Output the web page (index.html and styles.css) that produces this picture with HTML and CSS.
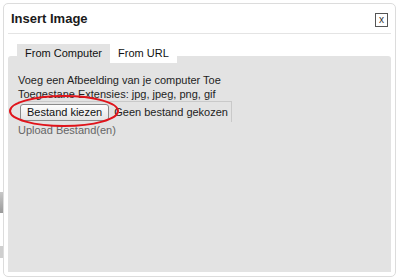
FILE: index.html
```html
<!DOCTYPE html>
<html lang="en">
<head>
  <meta charset="UTF-8" />
  <title>Insert Image</title>
  <link rel="stylesheet" href="styles.css">
</head>
<body>
  <div class="page-edge">
    <span class="edge-bar"></span>
    <span class="edge-bar small"></span>
  </div>

  <div class="dialog">
    <div class="dialog-header">
      <h2>Insert Image</h2>
      <button class="close-btn" type="button">x</button>
    </div>

    <ul class="tabs">
      <li class="tab active">From Computer</li>
      <li class="tab">From URL</li>
    </ul>

    <div class="panel">
      <p class="line">Voeg een Afbeelding van je computer Toe</p>
      <p class="line">Toegestane Extensies: jpg, jpeg, png, gif</p>
      <div class="file-input">
        <button class="file-btn" type="button">Bestand kiezen</button>
        <span class="file-name">Geen bestand gekozen</span>
      </div>
      <p class="line upload">Upload Bestand(en)</p>

      <!-- red marker round the button -->
      <svg class="marker" width="112" height="34" viewBox="0 0 112 34">
        <ellipse cx="56" cy="17" rx="54" ry="15" fill="none" stroke="#e0141b" stroke-width="2"/>
      </svg>
    </div>
  </div>
</body>
</html>
```

FILE: styles.css
```css
body {
  margin: 0;
  background: #fff;
  font-family: "Liberation Sans", Arial, sans-serif;
  font-size: 11px;
  color: #222;
  position: relative;
}

.page-edge {
  position: absolute;
  left: 0;
  top: 192px;
  width: 3px;
}

.edge-bar {
  display: block;
  height: 21px;
  background: linear-gradient(#c8c8c8, #9a9a9a);
}

.edge-bar.small {
  height: 12px;
  margin-top: 33px;
  background: #cfcfcf;
}

.dialog {
  margin: 3px;
  width: 383px;
  height: 268px;
  padding: 0 4px 4px;
  border: 1px solid #dcdcdc;
  border-radius: 5px;
  background: #fff;
  display: flex;
  flex-direction: column;
}

.dialog-header {
  height: 29px;
  border-bottom: 1px solid #e4e4e4;
  display: flex;
  align-items: center;
  justify-content: space-between;
  padding: 0 3px;
}

h2 {
  margin: 0;
  font-size: 13px;
  font-weight: bold;
  color: #1a1a1a;
}

.close-btn {
  width: 13px;
  height: 14px;
  padding: 0;
  border: 1px solid #555;
  background: #fff;
  font-family: "Liberation Sans", Arial, sans-serif;
  font-size: 10px;
  line-height: 10px;
  color: #333;
  margin-top: 2px;
}

.tabs {
  list-style: none;
  margin: 10px 0 -7px;
  padding: 0 0 0 9px;
  display: flex;
  position: relative;
  z-index: 1;
}

.tab {
  height: 19px;
  line-height: 19px;
  padding: 0 8px;
  background: #fff;
  color: #111;
}

.tab.active {
  background: #e3e3e3;
}

.panel {
  flex: 1;
  background: #e3e3e3;
  border-radius: 3px 3px 0 0;
  padding: 17px 10px 0;
  position: relative;
}

.line {
  margin: 0;
  line-height: 14px;
  color: #1e1e1e;
}

.file-input {
  width: 213px;
  height: 20px;
  border-top: 1px solid #c9c9c9;
  border-right: 1px solid #c9c9c9;
  display: flex;
  align-items: center;
  gap: 5px;
}

.file-btn {
  flex-shrink: 0;
  white-space: nowrap;
  height: 17px;
  margin-left: 2px;
  padding: 0 6px;
  border: 1px solid #8a8a8a;
  border-radius: 3px;
  background: linear-gradient(#fdfdfd, #e4e4e4);
  font-family: "Liberation Sans", Arial, sans-serif;
  font-size: 11px;
  color: #111;
}

.file-name {
  white-space: nowrap;
  color: #222;
}

.upload {
  margin-top: 1px;
  color: #666;
}

.marker {
  position: absolute;
  left: 0;
  top: 38px;
}
```
